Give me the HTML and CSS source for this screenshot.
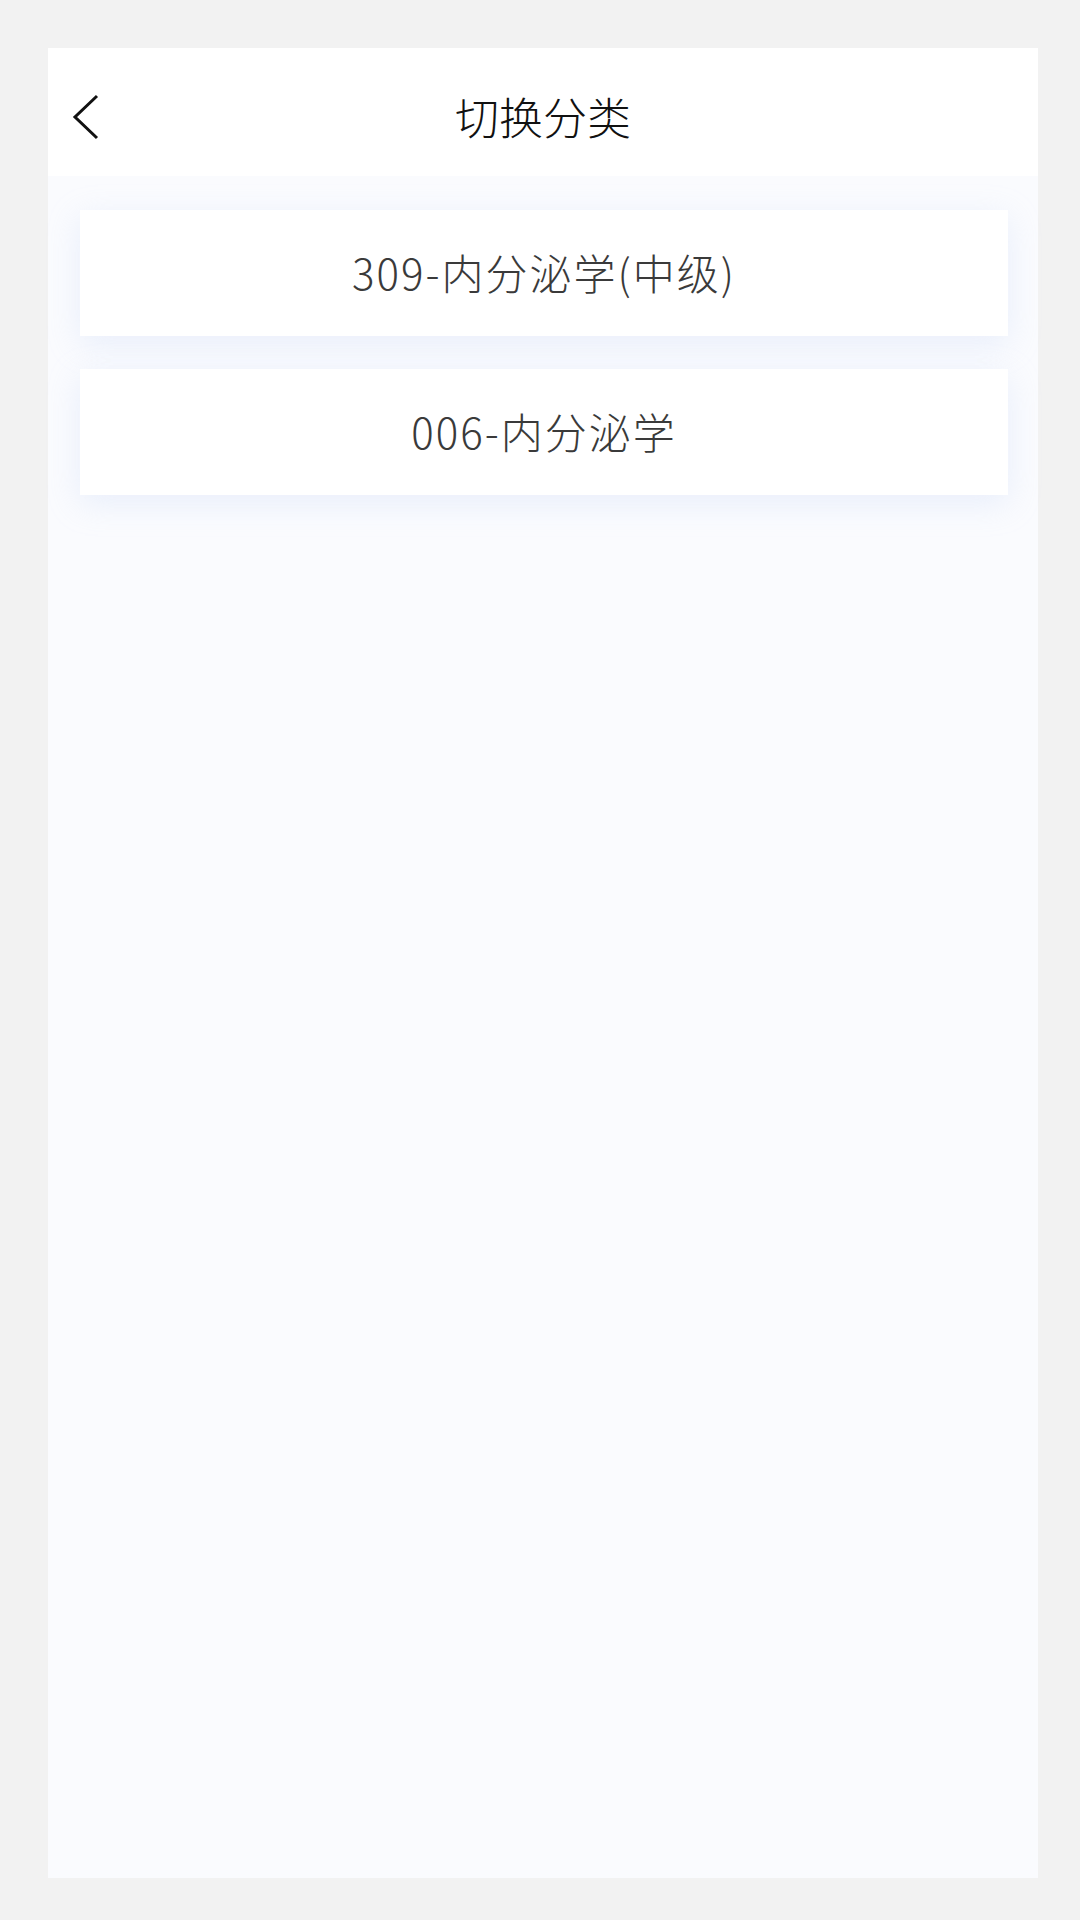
FILE: index.html
```html
<!DOCTYPE html>
<html lang="zh-CN">

<head>
    <meta charset="UTF-8">
    <meta name="viewport" content="width=device-width, initial-scale=1.0">
    <title>切换分类</title>
    <link rel="stylesheet" href="styles.css">
</head>

<body>
    <div class="wrap">
        <div class="page">
            <div class="header">
                <div class="back">
                    <svg width="30" height="48" viewBox="0 0 30 48">
                        <polyline points="25,3 3,24 25,45" fill="none" stroke="#111" stroke-width="3" />
                    </svg>
                </div>
                <div class="title">切换分类</div>
            </div>

            <div class="list">
                <div class="item">309-内分泌学(中级)</div>
                <div class="item">006-内分泌学</div>
            </div>
        </div>
    </div>
</body>

</html>
```

FILE: styles.css
```css
* {
    margin: 0;
    padding: 0;
    box-sizing: border-box;
}

html,
body {
    width: 100%;
    height: 100%;
}

body {
    background-color: #f2f2f2;
    font-family: "Noto Sans CJK SC", "Noto Sans", sans-serif;
}

.wrap {
    width: 100%;
    height: 100%;
    padding: 48px 42px 42px 48px;
}

.page {
    display: flex;
    flex-direction: column;
    width: 990px;
    height: 1830px;
    background-color: #fafbfe;
}

.header {
    position: relative;
    display: flex;
    align-items: center;
    justify-content: center;
    height: 128px;
    padding-top: 8px;
    background-color: #fff;
}

.back {
    position: absolute;
    left: 24px;
    top: 45px;
    width: 30px;
    height: 48px;
}

.title {
    font-size: 44px;
    font-weight: 300;
    color: #111;
    line-height: 1;
}

.list {
    display: flex;
    flex-direction: column;
    gap: 33px;
    padding: 34px 30px 0 32px;
}

.item {
    display: flex;
    align-items: center;
    justify-content: center;
    height: 126px;
    padding-bottom: 4px;
    background-color: #fff;
    box-shadow: 0 8px 30px rgba(190, 210, 245, 0.28);
    font-size: 42px;
    font-weight: 300;
    letter-spacing: 2px;
    color: #3a3a3a;
}
```
